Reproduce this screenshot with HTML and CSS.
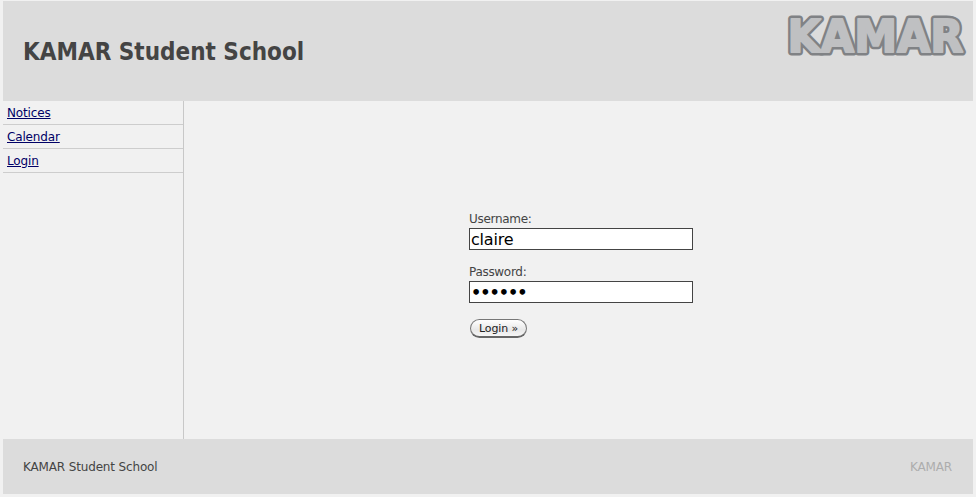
FILE: index.html
```html
<!DOCTYPE html>
<html lang="en">
<head>
    <meta charset="UTF-8">
    <meta name="viewport" content="width=device-width, initial-scale=1.0">
    <title>Login</title>
    <link rel="stylesheet" href="styles.css">
</head>
<body>
    <div class="page">
        <header class="header">
            <h1>KAMAR Student School</h1>
            <svg class="logo" width="215" height="64" viewBox="0 0 215 64" role="img" aria-label="KAMAR">
                <text class="logo-outer" x="29.5" y="47.5" textLength="176" lengthAdjust="spacingAndGlyphs">KAMAR</text>
                <text class="logo-inner" x="29.5" y="47.5" textLength="176" lengthAdjust="spacingAndGlyphs">KAMAR</text>
            </svg>
        </header>

        <div class="middle">
            <nav class="sidebar">
                <a href="#">Notices</a>
                <a href="#">Calendar</a>
                <a href="#">Login</a>
            </nav>

            <main class="content">
                <form class="login-form" action="#" method="post">
                    <label for="username">Username:</label>
                    <input type="text" id="username" name="username" value="claire">
                    <label for="password">Password:</label>
                    <input type="password" id="password" name="password" value="secret">
                    <button type="submit">Login »</button>
                </form>
            </main>
        </div>

        <footer class="footer">
            <span>KAMAR Student School</span>
            <span class="footer-brand">KAMAR</span>
        </footer>
    </div>
</body>
</html>
```

FILE: styles.css
```css
html, body {
    height: 100%;
}

body {
    margin: 0;
    background-color: #f1f1f1;
    font-family: "DejaVu Sans", sans-serif;
    font-size: 12px;
    letter-spacing: -0.15px;
    color: #444;
    overflow: hidden;
}

.page {
    display: flex;
    flex-direction: column;
    height: 493px;
    margin: 1px 3px 0;
}

.header {
    display: flex;
    justify-content: space-between;
    align-items: flex-start;
    height: 100px;
    flex-shrink: 0;
    padding: 0 0 0 20px;
    background-color: #dcdcdc;
}

.header h1 {
    margin: 36px 0 0;
    font-family: "DejaVu Sans Condensed", "DejaVu Sans", sans-serif;
    font-stretch: condensed;
    font-size: 24px;
    line-height: 30px;
    font-weight: bold;
    letter-spacing: 0;
    color: #444;
}

.logo {
    margin-top: 3px;
}

.logo text {
    font-family: "DejaVu Sans", sans-serif;
    font-weight: bold;
    font-size: 45px;
    letter-spacing: 0;
}

.logo-outer {
    fill: none;
    stroke: #808285;
    stroke-width: 7px;
    stroke-linejoin: round;
}

.logo-inner {
    fill: #bfc0c2;
    stroke: #bfc0c2;
    stroke-width: 2px;
    stroke-linejoin: round;
}

.middle {
    display: flex;
    flex: 1;
}

.sidebar {
    display: flex;
    flex-direction: column;
    width: 180px;
    border-right: 1px solid #c8c8c8;
}

.sidebar a {
    height: 23px;
    padding-left: 4px;
    border-bottom: 1px solid #cdcdcd;
    color: #000066;
    line-height: 24px;
}

.content {
    flex: 1;
    padding: 110px 0 0 285px;
}

.login-form {
    display: flex;
    flex-direction: column;
    align-items: flex-start;
    width: 224px;
}

.login-form label {
    line-height: 16px;
    margin-bottom: 1px;
    letter-spacing: -0.3px;
}

.login-form input {
    box-sizing: border-box;
    width: 224px;
    height: 22px;
    margin: 0 0 14px;
    padding: 0 1px;
    border: 1px solid #444;
    background-color: #fff;
    font-family: "DejaVu Sans", sans-serif;
    font-size: 16px;
    letter-spacing: -0.2px;
    color: #000;
    outline: none;
}

.login-form input[type="password"] {
    letter-spacing: -1px;
    font-weight: bold;
}

.login-form button {
    height: 19px;
    margin: 2px 0 0 1px;
    padding: 0 8px;
    border: 1px solid #777;
    border-bottom: 2px solid #666;
    border-radius: 10px;
    background: linear-gradient(#fff, #e8e8e8 60%, #f6f6f6);
    font-family: "DejaVu Sans", sans-serif;
    font-size: 11px;
    letter-spacing: -0.1px;
    color: #222;
    cursor: pointer;
}

.footer {
    display: flex;
    justify-content: space-between;
    align-items: center;
    height: 55px;
    flex-shrink: 0;
    padding: 0 21px 0 20px;
    background-color: #dcdcdc;
}

.footer-brand {
    color: #adadad;
}
```
